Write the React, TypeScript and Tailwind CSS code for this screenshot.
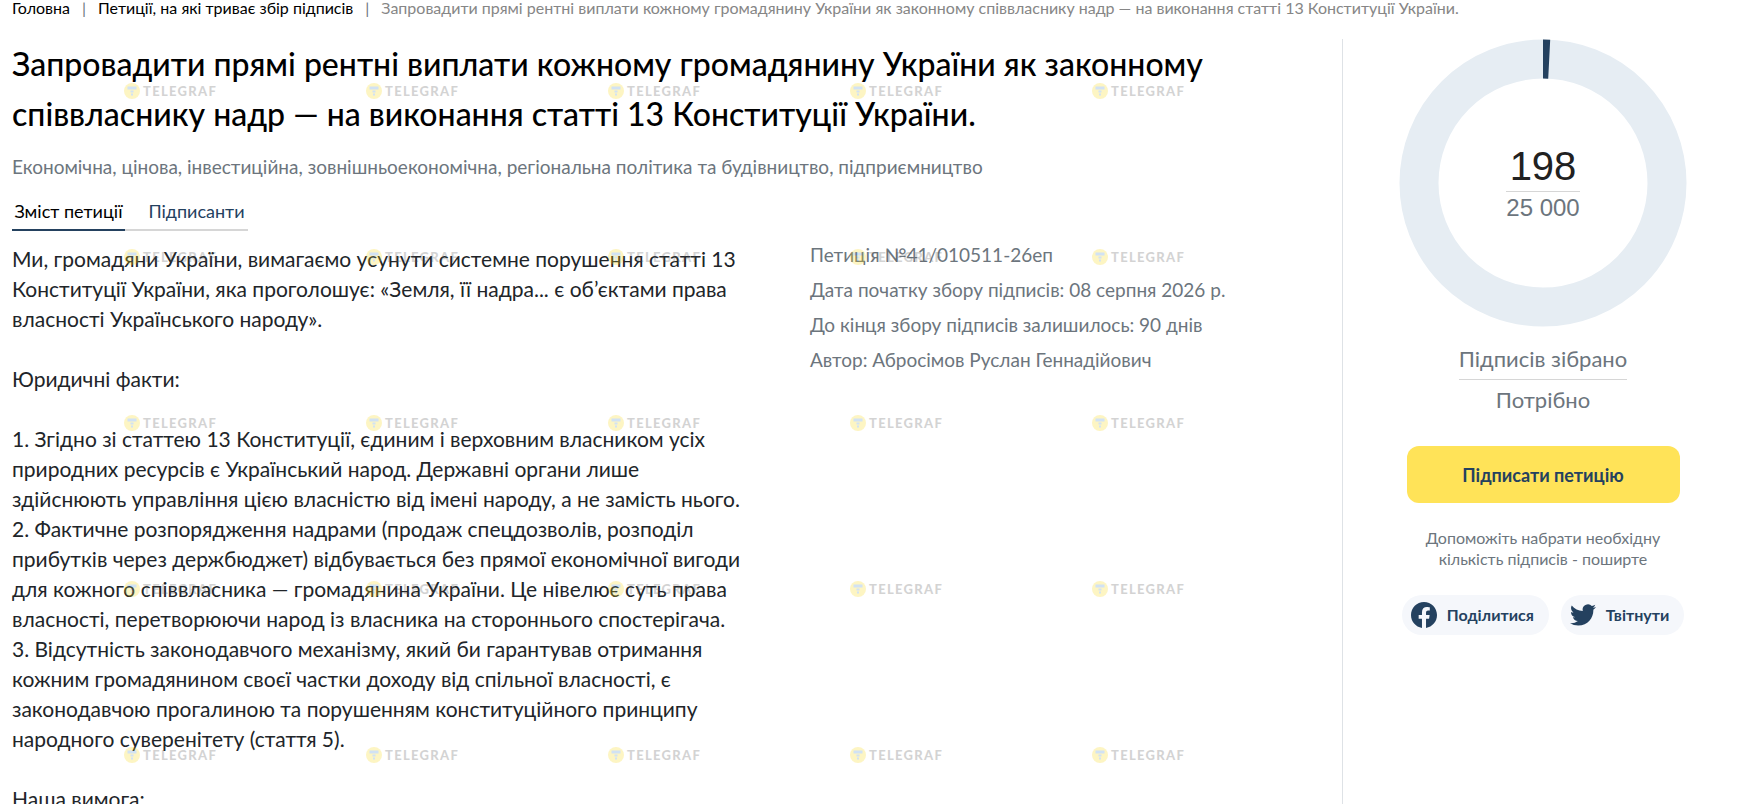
import React from "react";

const breadcrumbTitle =
  "Запровадити прямі рентні виплати кожному громадянину України як законному співвласнику надр — на виконання статті 13 Конституції України.";

const petitionText = [
  "Ми, громадяни України, вимагаємо усунути системне порушення статті 13",
  "Конституції України, яка проголошує: «Земля, її надра... є об’єктами права",
  "власності Українського народу».",
  "",
  "Юридичні факти:",
  "",
  "1. Згідно зі статтею 13 Конституції, єдиним і верховним власником усіх",
  "природних ресурсів є Український народ. Державні органи лише",
  "здійснюють управління цією власністю від імені народу, а не замість нього.",
  "2. Фактичне розпорядження надрами (продаж спецдозволів, розподіл",
  "прибутків через держбюджет) відбувається без прямої економічної вигоди",
  "для кожного співвласника — громадянина України. Це нівелює суть права",
  "власності, перетворюючи народ із власника на стороннього спостерігача.",
  "3. Відсутність законодавчого механізму, який би гарантував отримання",
  "кожним громадянином своєї частки доходу від спільної власності, є",
  "законодавчою прогалиною та порушенням конституційного принципу",
  "народного суверенітету (стаття 5).",
  "",
  "Наша вимога:",
].join("\n");

const petitionMeta = [
  "Петиція №41/010511-26еп",
  "Дата початку збору підписів: 08 серпня 2026 р.",
  "До кінця збору підписів залишилось: 90 днів",
  "Автор: Абросімов Руслан Геннадійович",
];

interface SignatureChartProps {
  signed: number;
  required: string;
}

const SignatureChart: React.FC<SignatureChartProps> = ({ signed, required }) => {
  return (
    <div className="relative w-72 h-72">
      <svg viewBox="0 0 288 288" className="w-72 h-72" aria-hidden="true">
        <circle cx="144" cy="144" r="124" fill="none" stroke="#e6edf3" strokeWidth="39" />
        <path d="M144 0.5A143.5 143.5 0 0 1 151.2 0.7L149.2 39.7A104.5 104.5 0 0 0 144 39.5Z" fill="#24415f" />
      </svg>
      <div className="absolute inset-0 flex flex-col items-center pt-[102px] font-['Liberation_Sans']">
        <span className="text-[40px] leading-[50px] text-[#212121]">{signed}</span>
        <span className="text-2xl leading-8 text-[#6c757d] border-t border-[#d6d6d6]">{required}</span>
      </div>
    </div>
  );
};

const FacebookIcon: React.FC = () => (
  <svg viewBox="0 0 24 24" className="w-[26px] h-[26px] shrink-0" fill="#24415f" aria-hidden="true">
    <path d="M24 12.07C24 5.4 18.63 0 12 0S0 5.4 0 12.07C0 18.1 4.39 23.09 10.13 24v-8.44H7.08v-3.49h3.05V9.41c0-3.02 1.79-4.69 4.53-4.69 1.31 0 2.68.24 2.68.24v2.97h-1.51c-1.49 0-1.96.93-1.96 1.89v2.25h3.33l-.53 3.49h-2.8V24C19.61 23.09 24 18.1 24 12.07Z" />
  </svg>
);

const TwitterIcon: React.FC = () => (
  <svg viewBox="0 0 24 24" className="w-[26px] h-[26px] shrink-0" fill="#24415f" aria-hidden="true">
    <path d="M23.95 4.57a10 10 0 0 1-2.82.77 4.96 4.96 0 0 0 2.16-2.72c-.95.55-2 .96-3.13 1.18a4.92 4.92 0 0 0-8.38 4.48C7.69 8.1 4.07 6.13 1.64 3.16a4.82 4.82 0 0 0-.67 2.48c0 1.71.87 3.21 2.19 4.1a4.9 4.9 0 0 1-2.23-.62v.06a4.92 4.92 0 0 0 3.95 4.83 5 5 0 0 1-2.21.08 4.94 4.94 0 0 0 4.6 3.42A9.87 9.87 0 0 1 0 19.54a14 14 0 0 0 7.55 2.21c9.05 0 14-7.5 14-13.98 0-.21 0-.42-.02-.63a9.94 9.94 0 0 0 2.46-2.55Z" />
  </svg>
);

const Watermark: React.FC = () => (
  <div
    aria-hidden="true"
    className="absolute left-[124px] top-[83px] grid grid-cols-[repeat(5,242px)] auto-rows-[166px] pointer-events-none"
  >
    {Array.from({ length: 25 }, (_, i) => (
      <div key={i} className="flex items-center gap-[3px] h-4 opacity-25">
        <svg viewBox="0 0 16 16" className="w-4 h-4">
          <circle cx="8" cy="8" r="8" fill="#fbd914" />
          <path d="M3.5 3.5h9v3h-9zM6.5 7.5h3v2h-3zM7 10.5h2v2H7z" fill="#4a8fd6" />
        </svg>
        <span className="font-['Lato'] font-black text-[13px] leading-4 tracking-widest text-[#555]">TELEGRAF</span>
      </div>
    ))}
  </div>
);

const App: React.FC = () => {
  return (
    <div className="relative h-screen overflow-hidden bg-white font-['Lato','Open_Sans',sans-serif] text-[#212529]">
      <nav className="flex items-center pl-3 text-base leading-4 whitespace-nowrap text-black">
        <a href="#home">Головна</a>
        <span className="mx-3 text-[#6c757d]">|</span>
        <a href="#petitions">Петиції, на які триває збір підписів</a>
        <span className="mx-3 text-[#6c757d]">|</span>
        <span className="text-[#868686]">{breadcrumbTitle}</span>
      </nav>

      <div className="flex mt-[23px] h-full">
        <main className="flex-1 min-w-0 pl-3">
          <h1 className="text-[32px] leading-[50px] font-medium text-black whitespace-pre-line">
            {"Запровадити прямі рентні виплати кожному громадянину України як законному\nспіввласнику надр — на виконання статті 13 Конституції України."}
          </h1>
          <p className="mt-3.5 text-[19px] leading-7 text-[#6c757d]">
            Економічна, цінова, інвестиційна, зовнішньоекономічна, регіональна політика та будівництво, підприємництво
          </p>

          <div role="tablist" className="flex mt-4 text-lg leading-7">
            <button role="tab" aria-selected="true" className="w-[113px] pb-1 border-b-2 border-[#24415f] text-black whitespace-nowrap">
              Зміст петиції
            </button>
            <button role="tab" aria-selected="false" className="w-[123px] pb-1 pl-5 border-b-2 border-[#d6d6d6] text-[#24415f] whitespace-nowrap">
              Підписанти
            </button>
          </div>

          <div className="flex mt-1.5">
            <div className="w-3/5 shrink-0 pt-[7px] text-[21px] leading-[30px] whitespace-pre">{petitionText}</div>
            <div className="text-[19px] leading-[35px] text-[#6c757d] whitespace-nowrap">
              {petitionMeta.map((line) => (
                <p key={line}>{line}</p>
              ))}
            </div>
          </div>
        </main>

        <aside className="w-[399px] shrink-0 flex flex-col items-center pl-0.5 border-l border-[#dee2e6]">
          <SignatureChart signed={198} required="25 000" />
          <div className="flex flex-col items-center mt-3 text-[22px] leading-10 text-[#6c757d]">
            <span className="border-b border-[#d6d6d6]">Підписів зібрано</span>
            <span>Потрібно</span>
          </div>
          <button className="w-[273px] h-[57px] mt-[26px] rounded-xl bg-[#ffe358] text-lg font-bold text-[#24415f]">
            Підписати петицію
          </button>
          <p className="mt-6 text-center text-base leading-[21px] text-[#6c757d]">
            Допоможіть набрати необхідну
            <br />
            кількість підписів - поширте
          </p>
          <div className="flex gap-3 mt-[26px] text-base font-bold text-[#24415f] whitespace-nowrap">
            <button className="flex items-center gap-2.5 h-10 pl-[9px] pr-[15px] rounded-full bg-[#f5f7fb]">
              <FacebookIcon />
              Поділитися
            </button>
            <button className="flex items-center gap-2.5 h-10 pl-[9px] pr-[15px] rounded-full bg-[#f5f7fb]">
              <TwitterIcon />
              Твітнути
            </button>
          </div>
        </aside>
      </div>

      <Watermark />
    </div>
  );
};

export default App;
